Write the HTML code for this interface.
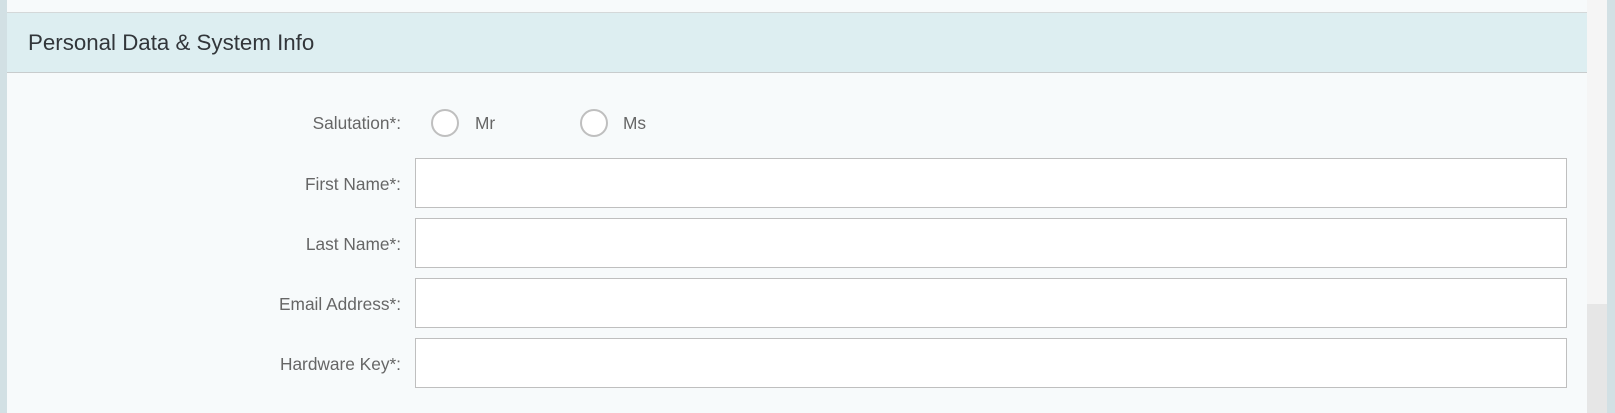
<!DOCTYPE html>
<html><head><style>
body{margin:0;width:1615px;height:413px;overflow:hidden;background:#d2e0e4;font-family:"Liberation Sans",Arial,sans-serif;position:relative}
.panel{position:absolute;left:7px;top:0;width:1580px;height:413px;background:#f7fafb}
.hdr{position:absolute;left:0;top:12px;width:1580px;height:59px;background:#ddeef1;border-top:1px solid #d4d8d9;border-bottom:1px solid #c8cccd}
.hdr span{position:absolute;left:21px;top:17px;font-size:22.3px;color:#32363a}
.sb{position:absolute;left:1587px;top:0;width:20px;height:413px;background:#f5f5f5}
.th{position:absolute;left:1587px;top:304px;width:20px;height:109px;background:#e6e6e6}
.lbl{position:absolute;right:1214px;font-size:17.3px;color:#666}
.in{position:absolute;left:415px;width:1150px;height:48px;background:#fff;border:1px solid #bfbfbf}
.rd{position:absolute;width:24px;height:24px;border:2px solid #bfbfbf;border-radius:50%;background:#fff;top:109px}
.rt{position:absolute;top:113px;font-size:17.3px;color:#666}
</style></head><body>
<div class="panel"><div class="hdr"><span>Personal Data &amp; System Info</span></div></div>
<div class="sb"></div><div class="th"></div>
<div class="lbl" style="top:113px">Salutation*:</div>
<div class="rd" style="left:431px"></div><div class="rt" style="left:475px">Mr</div>
<div class="rd" style="left:580px"></div><div class="rt" style="left:623px">Ms</div>
<div class="lbl" style="top:174px">First Name*:</div><div class="in" style="top:158px"></div>
<div class="lbl" style="top:234px">Last Name*:</div><div class="in" style="top:218px"></div>
<div class="lbl" style="top:294px">Email Address*:</div><div class="in" style="top:278px"></div>
<div class="lbl" style="top:354px">Hardware Key*:</div><div class="in" style="top:338px"></div>
</body></html>
